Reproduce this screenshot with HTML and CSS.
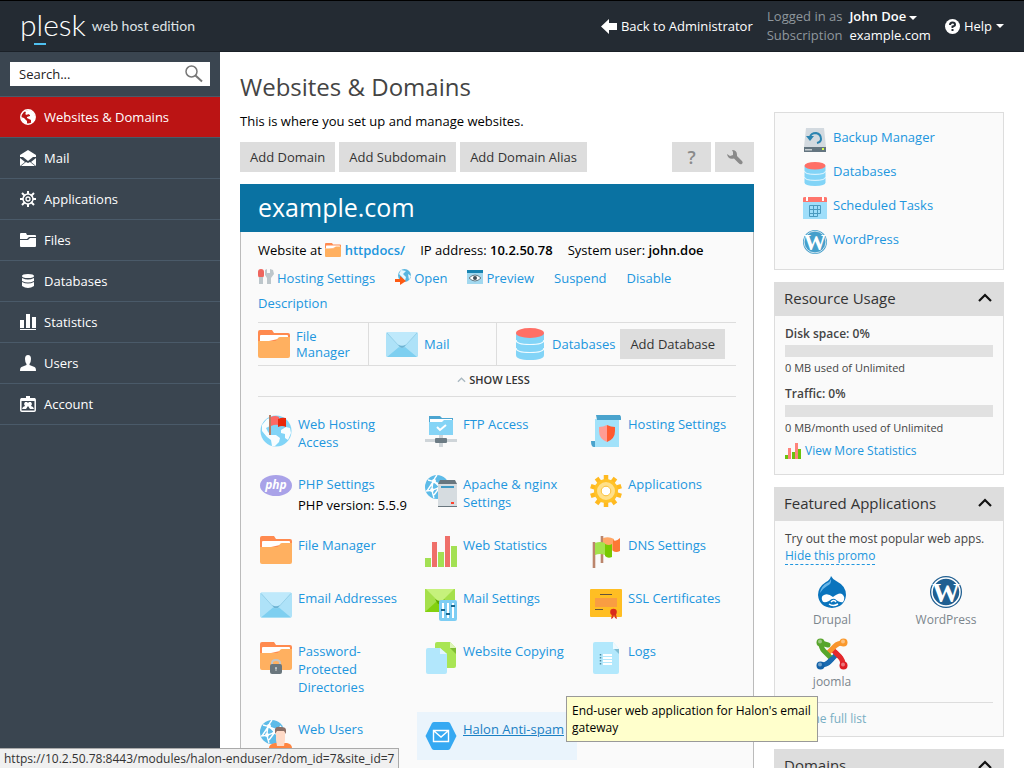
FILE: index.html
```html
<!DOCTYPE html>
<html lang="en">
<head>
<meta charset="utf-8">
<title>Websites &amp; Domains - Plesk</title>
<link rel="stylesheet" href="styles.css">
</head>
<body>
<svg class="sprite" aria-hidden="true">
  <symbol id="folder" viewBox="0 0 32 28">
    <path fill="#ff8a4f" d="M0 2q0-2 2-2h12l2 3h14q2 0 2 2v6H0z"/>
    <path fill="#fff" d="M2 13V6q0-1 1-1h26q1 0 1 1v3H20z"/>
    <path fill="#ffb060" d="M0 11h17q1 0 2-1.500l1-1.500q1-1 2-1h10v19q0 2-2 2H2q-2 0-2-2z"/>
  </symbol>
  <symbol id="envelope" viewBox="0 0 32 25">
    <rect width="32" height="25" rx="1.500" fill="#aee2f8"/>
    <path fill="#bfe9fb" d="M1 0h30L19 14q-3 2-6 0z"/>
    <path fill="#7ecff0" d="M1 25l12-10q3 2 6 0l12 10z"/>
    <path fill="none" stroke="#8cc8e2" stroke-width=".7" d="M1 1l12 13q3 2.500 6 0L31 1"/>
    <path fill="#6db4d4" d="M12 12.500q4 2.500 8 0l-2 2.800q-2 1-4 0z"/>
  </symbol>
  <symbol id="db" viewBox="0 0 32 32">
    <path fill="#82d4f7" d="M2 5v22q0 5 14 5t14-5V5z"/>
    <path fill="none" stroke="#f0fbff" stroke-width="1.200" d="M2 12q0 4.500 14 4.500T30 12M2 20q0 4.500 14 4.500T30 20"/>
    <ellipse cx="16" cy="5" rx="14" ry="5" fill="#ff6f66"/>
  </symbol>
  <symbol id="globeflag" viewBox="0 0 32 32">
    <circle cx="16" cy="16" r="15.500" fill="#81d4f7"/>
    <path fill="#f8fdff" d="M2 10l5-6 3-1v8l-4 2 2 4 3 3 5 0 4 3-1 4-4 4-3 0-1-6-4-3-5-6zM21 15l5-3 4 1 1 5-3 7-3-2v-4l-4-1z"/>
    <path stroke="#b67d64" stroke-width="2" d="M10 0v20"/>
    <path fill="#fd6965" d="M11 2q4-2 8 0v8q-4-1-8 1z"/><path fill="#e9280b" d="M18 4q4-2 8-1v9q-4-2-8 0z"/>
  </symbol>
  <symbol id="ftp" viewBox="0 0 32 32">
    <path fill="#4ca5d1" d="M4 1h11l2 2h11v6H4z"/><path fill="#fff" d="M5 4h22v4H5z"/>
    <path fill="#85d4f6" d="M4 7h13l2-2h9v15H4z"/>
    <path fill="none" stroke="#fff" stroke-width="2" d="M12 12l3 3 6-5"/>
    <path fill="#cfd5d9" d="M14 20h4v12h-4zM0 24h32v3H0z"/><rect x="10" y="23" width="12" height="5" rx="1" fill="#6c7b84"/>
  </symbol>
  <symbol id="scroll" viewBox="0 0 32 32">
    <path fill="#4aa3cd" d="M6 0h24v5H7zM1 26h8v6H4q-3 0-3-6z"/>
    <path fill="#a2e2fa" d="M5 4h24v28H5z"/><path fill="#4aa3cd" d="M7 0h22q2 0 2 3v2H7z"/>
    <path fill="#ff9c94" d="M9 12q4 0 8-2v17q-8-3-8-11z"/><path fill="#ff5a30" d="M25 12q-4 0-8-2v17q8-3 8-11z"/>
  </symbol>
  <symbol id="php" viewBox="0 0 32 21">
    <ellipse cx="16" cy="10.500" rx="16" ry="10.500" fill="#a9a2e8"/>
    <text x="16" y="14" text-anchor="middle" fill="#fff" font-family="Open Sans, sans-serif" font-size="12" font-style="italic" font-weight="700">php</text>
  </symbol>
  <symbol id="net" viewBox="0 0 24 24">
    <circle cx="12" cy="12" r="12" fill="#5dbbe8"/>
    <path fill="none" stroke="#fff" stroke-width="1.400" d="M3 5q9 1 15 12M12 0Q4 10 9 23M1 16q12 0 20-10M9 7l8 3M8 7L2 16M15 12l-6 8"/>
    <g fill="#fff"><circle cx="9" cy="6" r="2"/><circle cx="15" cy="12" r="2"/><circle cx="7" cy="15" r="2"/></g>
  </symbol>
  <symbol id="server" viewBox="0 0 32 32">
    <use href="#net" width="24" height="24"/>
    <path fill="#d6dce0" d="M13 8h19v24H13z"/><path fill="#69767e" d="M15 5h15l2 4H13zM13 31h19v1H13z"/>
    <path fill="#429ac4" d="M16 11h13v2H16z"/><path fill="#ff422e" d="M26 27h3v2h-3z"/>
  </symbol>
  <symbol id="gear" viewBox="0 0 32 32">
    <g stroke="#ffb91f" stroke-width="4.500"><path d="M16 0v32"/><path d="M16 0v32" transform="rotate(36 16 16)"/><path d="M16 0v32" transform="rotate(72 16 16)"/><path d="M16 0v32" transform="rotate(108 16 16)"/><path d="M16 0v32" transform="rotate(144 16 16)"/></g>
    <circle cx="16" cy="16" r="12" fill="#ffc229"/><circle cx="16" cy="16" r="7" fill="#fff" stroke="#ffe08a" stroke-width="4"/><circle cx="16" cy="16" r="4.800" fill="#fff" stroke="#fbbd2b" stroke-width="1"/>
  </symbol>
  <symbol id="bars" viewBox="0 0 32 32">
    <path fill="#a3e053" d="M0 22h6v9H0zM13 16h6v15h-6zM26 10h6v21h-6z"/><path fill="#ef6f69" d="M7 6h5v25H7zM20 0h5v31h-5z"/>
  </symbol>
  <symbol id="flags" viewBox="0 0 32 32">
    <path stroke="#bb856c" stroke-width="2.600" d="M4 6v26M12 0v27"/>
    <path fill="#ffa766" d="M13 2q6-2 11 1v12q-5-2-11 0z"/><path fill="#fd7834" d="M23 4q3 2 7-2v13q-4 2-7 0z"/>
    <path fill="#a4e24d" d="M5 7q5-2 10 0v12q-5-2-10 0z"/><path fill="#78c900" d="M15 8q4 2 7 0v13q-4 2-7-1z"/>
  </symbol>
  <symbol id="mailset" viewBox="0 0 32 32">
    <path fill="#a5e04b" d="M0 0h30v23H0z"/><path fill="#83d10f" d="M0 23l12-11h6l12 11z"/><path fill="#c6f17c" d="M1 0h28L17 12q-2 1-4 0z"/><path fill="#5da800" d="M10 10q5 4 10 0l-4 5h-3z"/>
    <rect x="14" y="11" width="18" height="21" rx="2" fill="#7dcdf3"/><path stroke="#fff" stroke-width="2" d="M18 14v15M23 14v15M28 14v15"/><path fill="#19668d" d="M16 20h4v2h-4zM21 24h4v2h-4zM26 16h4v2h-4z"/>
  </symbol>
  <symbol id="cert" viewBox="0 0 32 32">
    <rect width="32" height="28" rx="1" fill="#ffbe23"/><path fill="#f99d42" d="M5 9h22v9H5z"/><path stroke="#65543a" d="M10 5.500h12M5 20.500h8"/>
    <path fill="#d93623" d="M22 25h4l1 5-2-1-1-3-1 3-2 1z"/><circle cx="23.500" cy="23" r="3.300" fill="#d92b1b"/>
  </symbol>
  <symbol id="lockfolder" viewBox="0 0 32 32">
    <use href="#folder" width="32" height="28"/>
    <path fill="none" stroke="#c2c6c8" stroke-width="2" d="M12 23v-2q0-3 4-3t4 3v2"/><rect x="10" y="22" width="12" height="10" rx="2" fill="#6a767d"/><circle cx="16" cy="26" r="1" fill="#c9ced0"/><path stroke="#c9ced0" d="M16 26v3"/>
  </symbol>
  <symbol id="copy" viewBox="0 0 32 32">
    <path fill="#a9e554" d="M10 2q0-2 2-2h13l6 6v18q0 2-2 2H10z"/><path fill="#ddf5b8" d="M25 0v6h6z"/><path fill="#7fbd33" d="M25 6h6v6z"/>
    <path fill="#b2e7fc" d="M3 6h12l7 6v18q0 2-2 2H3q-2 0-2-2V8q0-2 2-2z"/><path fill="#e3f6fd" d="M15 6v6h7z"/>
  </symbol>
  <symbol id="logs" viewBox="0 0 32 32">
    <path fill="#b2e8fc" d="M5 0h18l6 7v23q0 2-2 2H5q-2 0-2-2V2q0-2 2-2z"/><path fill="#eefaff" d="M23 0v7h6z"/><path fill="#7fbdd3" d="M24 7h5v5z"/>
    <path stroke="#fff" stroke-width="1.800" d="M13 13h9M13 16h9M13 19h9M13 22h9"/><path stroke="#4e8ba2" stroke-width="1.500" stroke-dasharray="1.500 1.500" d="M10.500 12v11"/>
  </symbol>
  <symbol id="webuser" viewBox="0 0 32 32">
    <use href="#net" width="24" height="24"/>
    <path fill="#ff8541" d="M9 32v-4q0-4 6-5h12q5 1 5 5v4z"/><path fill="#ffdac7" d="M16 9h9v11l-1 6h-7l-1-6z"/><path fill="#8b6f66" d="M15 14V9q1-3 6-2 5 0 5 3v4l-2-3h-7z"/>
  </symbol>
  <symbol id="halon" viewBox="0 0 32 32">
    <path fill="#36a9f2" d="M9 2h14q1 0 2 1l6 12q1 1 0 2l-6 12q-1 1-2 1H9q-1 0-2-1L1 17q-1-1 0-2L7 3q1-1 2-1z"/>
    <path fill="none" stroke="#fff" stroke-width="1.400" d="M8.500 10.500h15v11h-15zM9 11l7 6 7-6"/>
  </symbol>
  <symbol id="backup" viewBox="0 0 24 24">
    <path fill="#d3dae0" d="M3 0h18l2 19H1z"/><path fill="#647580" d="M1 19h22v5H1z"/><path fill="#c6ced2" d="M2 21h7v1.500H2z"/><path fill="#d3ff50" d="M19 20h2v2h-2z"/>
    <path fill="none" stroke="#2b84b0" stroke-width="2" d="M7 9q1-4 6-4 5 1 5 6 0 3-4 4"/><path fill="#2b84b0" d="M3 8h8l-4 5z"/>
  </symbol>
  <symbol id="calendar" viewBox="0 0 24 24">
    <path fill="#9fdefa" d="M0 5h24v18H0z"/><path fill="#ff756c" d="M0 2q0-1 2-1h20q2 0 2 1v4H0z"/><path fill="#fff" d="M3 1h2v4H3zM19 1h2v4h-2z"/>
    <path fill="none" stroke="#4b9bc0" d="M6.500 9.500h11v8h-3v3h-8zM10.500 9v11M14.500 9v9M6 13.500h11M6 17.500h9"/>
  </symbol>
  <symbol id="wp" viewBox="0 0 32 32">
    <circle cx="16" cy="16" r="16" fill="#459fcb"/><circle cx="16" cy="16" r="14.500" fill="none" stroke="#fafafa" stroke-width="1"/>
    <text x="16" y="27" text-anchor="middle" fill="#fff" font-family="Liberation Serif, serif" font-weight="700" font-size="30">W</text>
  </symbol>
  <symbol id="wpdark" viewBox="0 0 32 32">
    <circle cx="16" cy="16" r="16" fill="#205f91"/><circle cx="16" cy="16" r="14" fill="none" stroke="#fff" stroke-width="1.500"/>
    <text x="16" y="26" text-anchor="middle" fill="#fff" font-family="Liberation Serif, serif" font-weight="700" font-size="28">W</text>
  </symbol>
  <symbol id="drupal" viewBox="0 0 32 32">
    <path fill="#0a74bd" d="M15 0q2 4 6 5.500Q30 10 30 19q-1 12-14 13Q3 31 2 19 2 11 10 6q4-2 5-6z"/><path fill="#69b6e8" d="M15 3q1 5-4 7-5 3-7 7 1-7 7-10 3-1 4-4z"/>
    <path fill="#fff" d="M8 19q4-2 9 2 6-5 9-3 4 3 1 8-3 1-8-3-3-1-6 2-6 3-7-1-1-4 2-5z"/><path fill="none" stroke="#fff" stroke-width="1.500" d="M13 28q4 3 9 0M15 26q3-3 5 0"/>
  </symbol>
  <symbol id="joomla" viewBox="0 0 32 32">
    <g fill="none" stroke-width="5" stroke-linecap="round" stroke-linejoin="round">
      <path stroke="#1b6bb0" d="M5 27q5 0 8-3l7-7"/>
      <path stroke="#e3282c" d="M27 27q0-5-3-8l-7-7"/>
      <path stroke="#f9952c" d="M27 5q-5 0-8 3l-7 7"/>
      <path stroke="#57a62b" d="M12 7L5 5q0 5 3 8l7 7"/>
      <path stroke="#1b6bb0" d="M13 24l3-3"/>
      <path stroke="#e3282c" d="M24 19l-4-4"/>
    </g>
    <circle cx="4.500" cy="4.500" r="4" fill="#58a52c"/><circle cx="27.500" cy="4.500" r="4" fill="#fa982b"/><circle cx="4.500" cy="27.500" r="4" fill="#1262a8"/><circle cx="27.500" cy="27.500" r="4" fill="#df1c23"/>
    <g fill="#fff" opacity=".4"><circle cx="4" cy="3.500" r="2"/><circle cx="27" cy="3.500" r="2"/><circle cx="4" cy="26.500" r="2"/><circle cx="27" cy="26.500" r="2"/></g>
  </symbol>
  <symbol id="chev" viewBox="0 0 14 10"><path fill="none" stroke="currentColor" stroke-width="2.200" d="M1 8l6-6 6 6"/></symbol>
  <symbol id="wrench" viewBox="0 0 16 16"><path fill="#8a8a8a" d="M5 1q5 0 5 5v1l4.500 4.500q2 2 .5 3.300T11.500 14L7 9.500Q1 11 0 5l3 2 3-1V3z"/></symbol>
</svg>

<div class="app">
  <header class="topbar">
    <a class="brand" href="#"><span class="brand-name">plesk</span><span class="brand-edition">web host edition</span></a>
    <div class="topbar-right">
      <a class="back" href="#"><svg width="16" height="15" viewBox="0 0 16 15" aria-hidden="true"><path fill="#fff" d="M0 7.500L8 0v4h8v7H8v4z"/></svg>Back to Administrator</a>
      <dl class="session">
        <dt>Logged in as</dt><dd><a class="strong" href="#">John Doe<i class="caret"></i></a></dd>
        <dt>Subscription</dt><dd><a href="#">example.com</a></dd>
      </dl>
      <a class="help" href="#"><svg width="15" height="15" viewBox="0 0 15 15" aria-hidden="true"><circle cx="7.500" cy="7.500" r="7.500" fill="#fff"/><path fill="none" stroke="#242b33" stroke-width="2" d="M5 6q0-2.500 2.500-2.500T10 5.700Q10 7 7.500 7.500V9M7.500 10v2"/></svg>Help<i class="caret"></i></a>
    </div>
  </header>

  <div class="columns">
    <aside class="sidebar">
      <form class="search">
        <input type="text" aria-label="Search" placeholder="Search...">
        <button type="submit" aria-label="Search"><svg width="18" height="18" viewBox="0 0 18 18"><circle cx="6.500" cy="6.500" r="5.500" fill="none" stroke="#777" stroke-width="1.500"/><path stroke="#777" stroke-width="2" d="M10.500 10.500L17 16.500"/></svg></button>
      </form>
      <nav class="menu">
        <a class="active" href="#"><svg viewBox="0 0 16 16"><circle cx="8" cy="8" r="7.200" fill="none" stroke="#fff" stroke-width="1.500"/><path fill="#fff" d="M5 2l4-1 4 2 2 4v4l-2 2-2 1v-3l-2-1-2-1V8l3-1V6L8 5 7 6 5 5l1-1zM1 8l3 1 3 3v3l-3-1-2-3z"/></svg>Websites &amp; Domains</a>
        <a href="#"><svg viewBox="0 0 16 16"><path fill="#fff" d="M8 0l8 5v2H0V5zM0 8l5 4-5 4zM16 8l-5 4 5 4zM1 16l5-4 2 1 2-1 5 4zM3 7h10l-5 4z"/></svg>Mail</a>
        <a href="#"><svg viewBox="0 0 16 16"><g fill="none" stroke="#fff"><g stroke-width="2"><path d="M8 0v3M8 13v3M0 8h3M13 8h3M2 2l3 3M11 11l3 3M14 2l-3 3M5 11l-3 3"/></g><circle cx="8" cy="8" r="5" stroke-width="1.500"/><circle cx="8" cy="8" r="2" stroke-width="1.300"/></g></svg>Applications</a>
        <a href="#"><svg viewBox="0 0 16 16"><path fill="#fff" d="M0 2q0-1 1-1h5l1 2h8q1 0 1 1v1H9L7 7H0zM0 8h8l2-2h6v8q0 1-1 1H1q-1 0-1-1z"/></svg>Files</a>
        <a href="#"><svg viewBox="0 0 16 16"><path fill="#fff" d="M2 3q0-2 6-2t6 2-6 2-6-2zM2 5q6 3 12 0v3q-6 3-12 0zM2 9q6 3 12 0v4q-6 4-12 0z"/></svg>Databases</a>
        <a href="#"><svg viewBox="0 0 16 16"><path fill="#fff" d="M0 6h4v8H0zM6 0h4v14H6zM12 3h4v11h-4zM0 15h16v1H0z"/></svg>Statistics</a>
        <a href="#"><svg viewBox="0 0 16 16"><path fill="#fff" d="M8 0q3 0 3 4 0 3-1.500 5v1l5 2q1.500.5 1.500 4H0q0-3.500 1.500-4l5-2V9Q5 7 5 4q0-4 3-4z"/></svg>Users</a>
        <a href="#"><svg viewBox="0 0 16 16"><rect x=".8" y="2.800" width="14.400" height="12.400" rx="1" fill="none" stroke="#fff" stroke-width="1.500"/><path fill="#fff" d="M6 0h4v2h5v3H1V2h5zM2 13l1-2 2-1-1-2 1-2h2l1 1 1-1h2l1 2-1 2 2 1 1 2h-4l-2-3-2 3z"/></svg>Account</a>
      </nav>
    </aside>

    <main class="content">
      <section class="primary">
        <h1>Websites &amp; Domains</h1>
        <p class="intro">This is where you set up and manage websites.</p>
        <div class="toolbar">
          <button class="btn">Add Domain</button><button class="btn">Add Subdomain</button><button class="btn">Add Domain Alias</button>
          <button class="btn btn-icon push" aria-label="Help topics"><span class="question">?</span></button><button class="btn btn-icon" aria-label="Tools"><svg width="16" height="16"><use href="#wrench"/></svg></button>
        </div>
        <article class="domain">
          <h2>example.com</h2>
          <div class="domain-body">
            <p class="facts">
              <span>Website at <svg width="16" height="14"><use href="#folder"/></svg> <a class="strong" href="#">httpdocs/</a></span>
              <span>IP address: <b>10.2.50.78</b></span>
              <span>System user: <b>john.doe</b></span>
            </p>
            <p class="actions">
              <a href="#"><svg width="16" height="16" viewBox="0 0 16 16"><rect width="6" height="9" rx="3" fill="#ee655e"/><path fill="#bdc6cb" d="M1 8h4v7H1zM7 1l2-1v4h3V0l3 1 1 4-3 4v6H9V9L7 6z"/></svg>Hosting Settings</a>
              <a href="#"><svg width="16" height="16" viewBox="0 0 16 16"><circle cx="9.500" cy="6.500" r="6.500" fill="#59b5df"/><path fill="#e8f7fe" d="M6 1l5 1-3 3 3 3-1 4-3-4-3-3zM13 5l3 2-2 4z"/><path fill="#fe5a13" d="M0 10h5V7l6 5-6 4v-3H0z"/></svg>Open</a>
              <a href="#"><svg width="16" height="16" viewBox="0 0 16 16"><path fill="#a2d8ef" d="M0 1h16v14H0z"/><path fill="#1884b2" d="M0 1h16v3H0z"/><path fill="#fff" stroke="#687b85" d="M2 9q6-6 12 0-6 6-12 0z"/><circle cx="8" cy="9" r="2" fill="#3f4f58"/></svg>Preview</a>
              <a href="#">Suspend</a>
              <a href="#">Disable</a>
              <a href="#">Description</a>
            </p>
            <div class="shortcuts">
              <div class="cell"><svg width="32" height="28"><use href="#folder"/></svg><a href="#">File<br>Manager</a></div>
              <div class="cell"><svg width="32" height="25"><use href="#envelope"/></svg><a href="#">Mail</a></div>
              <div class="cell"><svg width="32" height="32"><use href="#db"/></svg><a href="#">Databases</a><button class="btn">Add Database</button></div>
            </div>
            <button class="showless"><svg width="9" height="6"><use href="#chev"/></svg>SHOW LESS</button>
            <div class="tools">
              <div class="tool"><svg><use href="#globeflag"/></svg><div><a href="#">Web Hosting Access</a></div></div>
              <div class="tool"><svg><use href="#ftp"/></svg><div><a href="#">FTP Access</a></div></div>
              <div class="tool"><svg><use href="#scroll"/></svg><div><a href="#">Hosting Settings</a></div></div>
              <div class="tool"><svg class="h21"><use href="#php"/></svg><div><a href="#">PHP Settings</a><p>PHP version: 5.5.9</p></div></div>
              <div class="tool"><svg><use href="#server"/></svg><div><a href="#">Apache &amp; nginx Settings</a></div></div>
              <div class="tool"><svg><use href="#gear"/></svg><div><a href="#">Applications</a></div></div>
              <div class="tool"><svg class="h28"><use href="#folder"/></svg><div><a href="#">File Manager</a></div></div>
              <div class="tool"><svg><use href="#bars"/></svg><div><a href="#">Web Statistics</a></div></div>
              <div class="tool"><svg><use href="#flags"/></svg><div><a href="#">DNS Settings</a></div></div>
              <div class="tool"><svg><use href="#envelope"/></svg><div><a href="#">Email Addresses</a></div></div>
              <div class="tool"><svg><use href="#mailset"/></svg><div><a href="#">Mail Settings</a></div></div>
              <div class="tool"><svg><use href="#cert"/></svg><div><a href="#">SSL Certificates</a></div></div>
              <div class="tool"><svg><use href="#lockfolder"/></svg><div><a href="#">Password-Protected Directories</a></div></div>
              <div class="tool"><svg><use href="#copy"/></svg><div><a href="#">Website Copying</a></div></div>
              <div class="tool"><svg><use href="#logs"/></svg><div><a href="#">Logs</a></div></div>
              <div class="tool"><svg><use href="#webuser"/></svg><div><a href="#">Web Users</a></div></div>
              <div class="tool hovered"><svg><use href="#halon"/></svg><div><a href="#">Halon Anti-spam</a></div>
                <div class="tooltip" role="tooltip">End-user web application for Halon's email gateway</div></div>
            </div>
          </div>
        </article>
      </section>

      <aside class="extras">
        <nav class="box quick">
          <a href="#"><svg><use href="#backup"/></svg>Backup Manager</a>
          <a href="#"><svg><use href="#db"/></svg>Databases</a>
          <a href="#"><svg><use href="#calendar"/></svg>Scheduled Tasks</a>
          <a href="#"><svg><use href="#wp"/></svg>WordPress</a>
        </nav>
        <section>
          <h3>Resource Usage<button aria-label="Collapse Resource Usage"><svg width="14" height="10"><use href="#chev"/></svg></button></h3>
          <div class="box usage">
            <p class="strong">Disk space: 0%</p><div class="meter"></div><p class="note">0 MB used of Unlimited</p>
            <p class="strong second">Traffic: 0%</p><div class="meter"></div><p class="note">0 MB/month used of Unlimited</p>
            <a class="more" href="#"><svg width="16" height="16" viewBox="0 0 16 16"><path fill="#6bc20b" d="M0 12h3v4H0zM7 9h3v7H7zM13 6h3v10h-3z"/><path fill="#ff837b" d="M3 5h3v11H3zM10 0h3v16h-3z"/></svg>View More Statistics</a>
          </div>
        </section>
        <section>
          <h3>Featured Applications<button aria-label="Collapse Featured Applications"><svg width="14" height="10"><use href="#chev"/></svg></button></h3>
          <div class="box featured">
            <p>Try out the most popular web apps.</p>
            <a class="hide" href="#">Hide this promo</a>
            <div class="apps">
              <a href="#"><svg><use href="#drupal"/></svg>Drupal</a>
              <a href="#"><svg><use href="#wpdark"/></svg>WordPress</a>
              <a href="#"><svg><use href="#joomla"/></svg>joomla</a>
            </div>
            <a class="full" href="#">See the full list</a>
          </div>
        </section>
        <section>
          <h3>Domains<button aria-label="Collapse Domains"><svg width="14" height="10"><use href="#chev"/></svg></button></h3>
        </section>
      </aside>
    </main>
  </div>
  <div class="status">https://10.2.50.78:8443/modules/halon-enduser/?dom_id=7&amp;site_id=7</div>
</div>
</body>
</html>
```
FILE: styles.css
```css
* { box-sizing: border-box; }
body { margin: 0; background: #fff; color: #000; font: 13px/18px "Open Sans", sans-serif; }
h1, h2, h3, p, dl, dd { margin: 0; font-weight: 400; }
a { color: #2196de; text-decoration: none; }
b, .strong { font-weight: 600; }
svg { flex: none; }
button { border: 0; padding: 0; background: none; font: inherit; color: inherit; cursor: pointer; }
.sprite { display: none; }
.app { display: flex; flex-direction: column; height: 100vh; overflow: hidden; position: relative; }

.topbar { flex: none; display: flex; justify-content: space-between; align-items: center; height: 52px; padding: 0 20px; background: #242b33; border-top: 1px solid #000; border-bottom: 1px solid #1a2027; }
.topbar a { color: #fff; }
.brand { display: flex; align-items: center; gap: 6px; font-family: Lato, sans-serif; }
.brand-name { position: relative; padding-bottom: 5px; font-size: 30px; line-height: 36px; font-weight: 300; }
.brand-name::after { content: ""; position: absolute; left: 14px; bottom: 2px; width: 12px; height: 2px; background: #4fc0f0; }
.topbar .brand-edition { font-size: 14px; color: #dfe3e6; }
.topbar-right { display: flex; align-items: center; gap: 14px; }
.back, .help { display: flex; align-items: center; gap: 4px; }
.session { display: grid; grid-template-columns: auto auto; column-gap: 7px; line-height: 19px; }
.session dt { color: #8f979d; text-align: right; }
.caret { display: inline-block; border: 4px solid transparent; border-top-color: #fff; border-bottom: 0; margin-left: 3px; vertical-align: middle; }
.help .caret { margin-left: 0; }

.columns { flex: 1; display: flex; min-height: 0; }
.sidebar { flex: none; width: 220px; background: #3a4550; }
.search { display: flex; align-items: center; margin: 10px; height: 24px; background: #fff; padding-right: 7px; }
.search input { flex: 1; min-width: 0; border: 0; padding: 0 9px; background: none; font: inherit; outline: 0; }
.search input::placeholder { color: #222; opacity: 1; }
.search svg, .btn-icon svg { display: block; }
.menu { border-top: 1px solid #4a5a69; }
.menu a { display: flex; align-items: center; gap: 8px; height: 41px; padding: 0 20px; border-bottom: 1px solid #4a5a69; color: #fff; }
.menu svg { width: 16px; height: 16px; }
.menu .active { background: #bb1414; }

.content { flex: 1; display: flex; gap: 20px; min-width: 0; padding: 20px 20px 0; }
.primary { flex: 1; min-width: 0; display: flex; flex-direction: column; }
h1 { font-size: 24px; line-height: 30px; color: #444; }
.intro { margin: 10px 0 12px; }
.toolbar { display: flex; gap: 4px; margin-bottom: 12px; }
.btn { height: 30px; padding: 0 10px; background: #ddd; color: #333; white-space: nowrap; }
.btn-icon { width: 39px; display: grid; place-items: center; padding: 0; }
.push { margin-left: auto; }
.question { font-size: 18px; font-weight: 600; color: #8a8a8a; }
.domain { flex: 1 0 auto; display: flex; flex-direction: column; }
.domain h2 { height: 48px; padding: 0 18px; background: #0a72a2; color: #fff; font-size: 25px; line-height: 46px; }
.domain-body { flex: 1 0 auto; padding: 9px 17px 20px; background: #fafafa; border: 1px solid #bbb; border-top: 0; }
.facts { display: flex; gap: 15px; white-space: nowrap; }
.facts svg { vertical-align: -2px; }
.actions { display: flex; flex-wrap: wrap; column-gap: 20px; padding: 7px 0 6px; line-height: 25px; }
.actions svg { margin-right: 3px; vertical-align: -2px; }
.shortcuts { display: flex; height: 44px; border: solid #ddd; border-width: 1px 0; line-height: 16px; }
.cell { flex: none; display: flex; align-items: center; gap: 6px; padding: 0 17px; border-right: 1px solid #ddd; }
.cell:first-child { padding-left: 0; width: 111px; }
.cell:nth-child(2) { width: 128px; }
.cell:last-child { border-right: 0; padding-right: 0; }
.cell .btn { margin-left: -1px; }
.showless { display: flex; align-items: center; justify-content: center; gap: 3px; width: 100%; height: 31px; padding: 0 7px 2px 0; border-bottom: 1px solid #ddd; font-size: 11px; font-weight: 600; color: #333; }
.showless svg { color: #a9b8c1; }
.tools { display: grid; grid-template-columns: repeat(3, minmax(0, 1fr)); gap: 5px; margin: 10px -6px 0; }
.tool { display: flex; align-items: flex-start; gap: 6px; padding: 8px; position: relative; }
.tool > svg { width: 32px; height: 32px; }
.tool > .h21 { height: 21px; }
.tool > .h28 { height: 28px; }
.tool > div:not(.tooltip) { min-width: 0; }
.tool a { display: block; padding-bottom: 3px; }
.tool p { line-height: 19px; white-space: nowrap; }
.hovered { background: #eaf4fc; }
.hovered a { color: #1a80c4; text-decoration: underline; }
.tooltip { position: absolute; left: 149px; top: -16px; z-index: 2; width: 252px; padding: 5px; border: 1px solid #999; background: #ffc; font-size: 12px; line-height: 17px; }

.extras { flex: none; width: 230px; padding-top: 40px; display: flex; flex-direction: column; gap: 12px; }
.box { border: 1px solid #ddd; background: #fafafa; }
.quick { display: grid; gap: 10px; padding: 15px 28px; }
.quick a { display: flex; gap: 6px; height: 24px; }
.quick svg { width: 24px; height: 24px; }
h3 { display: flex; justify-content: space-between; align-items: center; height: 34px; padding: 0 12px 2px 10px; background: #ddd; color: #333; font-size: 15px; }
h3 button { color: #111; }
h3 svg { display: block; }
.usage, .featured { border-top: 0; padding: 9px 10px 14px; color: #444; font-size: 12px; }
.meter { height: 12px; margin: 2px 0; background: #e1e1e1; }
.usage .note { font-size: 11px; }
.usage .second { margin-top: 8px; }
.more { display: flex; align-items: center; gap: 4px; margin-top: 5px; }
.featured { line-height: 17px; padding-bottom: 9px; }
.hide { display: inline-block; border-bottom: 1px dashed #2196de; }
.apps { display: grid; grid-template-columns: 1fr 1fr; gap: 10px 20px; padding: 11px 0 12px; border-bottom: 1px solid #ddd; }
.apps a { display: flex; flex-direction: column; align-items: center; gap: 3px; color: #7a858c; }
.apps svg { width: 32px; height: 32px; }
.full { display: block; margin-top: 7px; color: #77aec3; }
.status { position: absolute; left: 0; bottom: 0; z-index: 3; height: 20px; padding: 0 4px; border: 1px solid #aaa; border-left: 0; border-bottom: 0; background: #f0f0f0; color: #333; font-size: 12px; line-height: 19px; }
```
